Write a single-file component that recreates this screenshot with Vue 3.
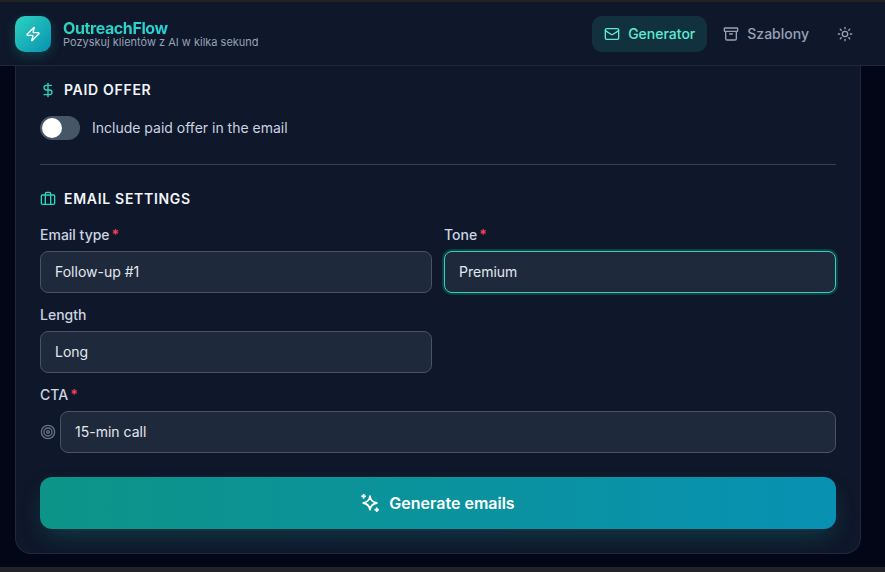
<script setup>
const row1 = [
  { label: 'Email type', value: 'Follow-up #1', req: true },
  { label: 'Tone', value: 'Premium', req: true, focus: true },
]
</script>

<template>
  <div class="page">
    <header class="topbar">
      <div class="brand">
        <div class="logo">
          <svg width="16" height="16" viewBox="0 0 24 24" fill="none" stroke="#fff" stroke-width="2" stroke-linecap="round" stroke-linejoin="round"><path d="M4 14a1 1 0 0 1-.78-1.63l9.9-10.2a.5.5 0 0 1 .86.46l-1.92 6.02A1 1 0 0 0 13 10h7a1 1 0 0 1 .78 1.63l-9.9 10.2a.5.5 0 0 1-.86-.46l1.92-6.02A1 1 0 0 0 11 14z"/></svg>
        </div>
        <div class="brand-text">
          <div class="title">OutreachFlow</div>
          <div class="subtitle">Pozyskuj klientów z AI w kilka sekund</div>
        </div>
      </div>
      <nav class="nav">
        <a class="nav-item active">
          <svg width="16" height="16" viewBox="0 0 24 24" fill="none" stroke="currentColor" stroke-width="2" stroke-linecap="round" stroke-linejoin="round"><path d="m22 7-8.99 5.73a2 2 0 0 1-2.02 0L2 7"/><rect x="2" y="4" width="20" height="16" rx="2"/></svg>
          Generator
        </a>
        <a class="nav-item">
          <svg width="16" height="16" viewBox="0 0 24 24" fill="none" stroke="currentColor" stroke-width="2" stroke-linecap="round" stroke-linejoin="round"><rect x="2" y="3" width="20" height="5" rx="1"/><path d="M4 8v11a2 2 0 0 0 2 2h12a2 2 0 0 0 2-2V8"/><path d="M10 12h4"/></svg>
          Szablony
        </a>
        <button class="theme">
          <svg width="16" height="16" viewBox="0 0 24 24" fill="none" stroke="currentColor" stroke-width="2" stroke-linecap="round" stroke-linejoin="round"><circle cx="12" cy="12" r="4"/><path d="M12 2v2M12 20v2M4.93 4.93l1.41 1.41M17.66 17.66l1.41 1.41M2 12h2M20 12h2M6.34 17.66l-1.41 1.41M19.07 4.93l-1.41 1.41"/></svg>
        </button>
      </nav>
    </header>

    <main class="main">
      <section class="card">
        <h2 class="heading first">
          <svg width="16" height="16" viewBox="0 0 24 24" fill="none" stroke="#2dd4bf" stroke-width="2" stroke-linecap="round" stroke-linejoin="round"><line x1="12" y1="2" x2="12" y2="22"/><path d="M17 5H9.5a3.5 3.5 0 0 0 0 7h5a3.5 3.5 0 0 1 0 7H6"/></svg>
          PAID OFFER
        </h2>
        <div class="toggle-row">
          <span class="toggle"><span class="knob"></span></span>
          <span class="toggle-label">Include paid offer in the email</span>
        </div>
        <hr class="divider" />
        <h2 class="heading">
          <svg width="16" height="16" viewBox="0 0 24 24" fill="none" stroke="#2dd4bf" stroke-width="2" stroke-linecap="round" stroke-linejoin="round"><path d="M16 20V4a2 2 0 0 0-2-2h-4a2 2 0 0 0-2 2v16"/><rect x="2" y="6" width="20" height="14" rx="2"/></svg>
          EMAIL SETTINGS
        </h2>
        <div class="grid">
          <div v-for="f in row1" :key="f.label" class="field">
            <label class="label">{{ f.label }}<span v-if="f.req" class="req">*</span></label>
            <div class="input" :class="{ focus: f.focus }">{{ f.value }}</div>
          </div>
          <div class="field">
            <label class="label">Length</label>
            <div class="input">Long</div>
          </div>
        </div>
        <div class="field cta">
          <label class="label">CTA<span class="req">*</span></label>
          <div class="cta-row">
            <svg class="target" width="16" height="16" viewBox="0 0 24 24" fill="none" stroke="#64748b" stroke-width="2" stroke-linecap="round" stroke-linejoin="round"><circle cx="12" cy="12" r="10"/><circle cx="12" cy="12" r="6"/><circle cx="12" cy="12" r="2"/></svg>
            <div class="input grow">15-min call</div>
          </div>
        </div>
        <button class="generate">
          <svg width="18" height="18" viewBox="0 0 24 24" fill="none" stroke="#fff" stroke-width="2.4" stroke-linecap="round" stroke-linejoin="round"><path d="M12 3c.7 5 3.500 8 9 9-5.500 1-8.300 4-9 9-.7-5-3.500-8-9-9 5.500-1 8.300-4 9-9z"/><path d="M3.500 1v4M1.500 3h4M21 19v4M19 21h4"/></svg>
          Generate emails
        </button>
      </section>
    </main>
    <div class="strip"></div>
  </div>
</template>

<style scoped>
.page {
  width: 885px;
  height: 572px;
  display: flex;
  flex-direction: column;
  overflow: hidden;
  background: #020617;
  font-family: Inter, "Liberation Sans", sans-serif;
  border-top: 2px solid #222326;
  box-sizing: border-box;
}
.topbar {
  height: 64px;
  flex: none;
  box-sizing: border-box;
  display: flex;
  align-items: center;
  justify-content: space-between;
  padding: 0 24px 0 15px;
  background: #0f172a;
  border-bottom: 1px solid #1e293b;
}
.brand { display: flex; align-items: center; gap: 12px; }
.logo {
  width: 36px;
  height: 36px;
  border-radius: 10px;
  display: flex;
  align-items: center;
  justify-content: center;
  background: linear-gradient(135deg, #2dd4bf, #0891b2);
  box-shadow: 0 4px 12px rgba(20, 184, 166, .25);
}
.brand-text { display: flex; flex-direction: column; padding-top: 2px; }
.title {
  font-size: 16px;
  line-height: 16px;
  font-weight: 700;
  letter-spacing: -.4px;
  background: linear-gradient(90deg, #2dd4bf, #22d3ee);
  -webkit-background-clip: text;
  background-clip: text;
  color: transparent;
}
.subtitle {
  font-size: 11px;
  line-height: 13px;
  color: #94a3b8;
}
.nav { display: flex; align-items: center; gap: 4px; }
.nav-item {
  height: 36px;
  display: flex;
  align-items: center;
  gap: 8px;
  padding: 0 12px;
  border-radius: 10px;
  font-size: 14px;
  font-weight: 500;
  color: #94a3b8;
}
.nav-item.active { background: rgba(45, 212, 191, .14); color: #5eead4; }
.theme {
  width: 32px;
  height: 36px;
  padding: 0;
  border: 0;
  margin-left: 4px;
  background: none;
  color: #94a3b8;
  display: flex;
  align-items: center;
  justify-content: center;
}
.main { flex: 1; padding: 0 24px 0 15px; min-height: 0; }
.card {
  width: 846px;
  box-sizing: border-box;
  height: 488px;
  padding: 0 24px;
  background: #0f172a;
  border: 1px solid #1e293b;
  border-top: 0;
  border-radius: 0 0 16px 16px;
  overflow: hidden;
}
.heading {
  margin: 0;
  display: flex;
  align-items: center;
  gap: 8px;
  font-size: 14px;
  line-height: 20px;
  font-weight: 600;
  letter-spacing: .7px;
  color: #f1f5f9;
}
.heading.first { padding-top: 14px; }
.toggle-row {
  margin-top: 16px;
  display: flex;
  align-items: center;
  gap: 12px;
}
.toggle {
  width: 40px;
  height: 24px;
  border-radius: 12px;
  background: #475569;
  display: flex;
  align-items: center;
  padding-left: 2px;
  box-sizing: border-box;
}
.knob { width: 20px; height: 20px; border-radius: 50%; background: #fff; }
.toggle-label { font-size: 14px; line-height: 20px; color: #cbd5e1; }
.divider { margin: 24px 0 24px; border: 0; border-top: 1px solid #334155; }
.grid {
  margin-top: 16px;
  display: grid;
  grid-template-columns: 1fr 1fr;
  gap: 12px;
  row-gap: 12px;
}
.field { display: flex; flex-direction: column; gap: 6px; }
.label { font-size: 14px; line-height: 20px; font-weight: 500; color: #cbd5e1; }
.req { color: #f43f5e; margin-left: 2px; font-weight: 600; }
.input {
  height: 42px;
  box-sizing: border-box;
  display: flex;
  align-items: center;
  padding: 0 14px 2px;
  border: 1px solid #475569;
  border-radius: 8px;
  background: #1e293b;
  font-size: 14px;
  color: #e2e8f0;
}
.input.focus { border-color: #2dd4bf; box-shadow: 0 0 0 2px rgba(20, 184, 166, .25); }
.cta { margin-top: 12px; }
.cta-row { display: flex; align-items: center; gap: 4px; }
.target { flex: none; }
.grow { flex: 1; }
.generate {
  margin-top: 24px;
  width: 100%;
  height: 52px;
  border: 0;
  border-radius: 12px;
  background: linear-gradient(90deg, #0d9488, #0891b2);
  color: #fff;
  font-family: inherit;
  font-size: 16px;
  font-weight: 600;
  display: flex;
  align-items: center;
  justify-content: center;
  gap: 10px;
  box-shadow: 0 10px 25px -5px rgba(20, 184, 166, .25);
}
.strip { height: 5px; flex: none; background: #222326; }
</style>
